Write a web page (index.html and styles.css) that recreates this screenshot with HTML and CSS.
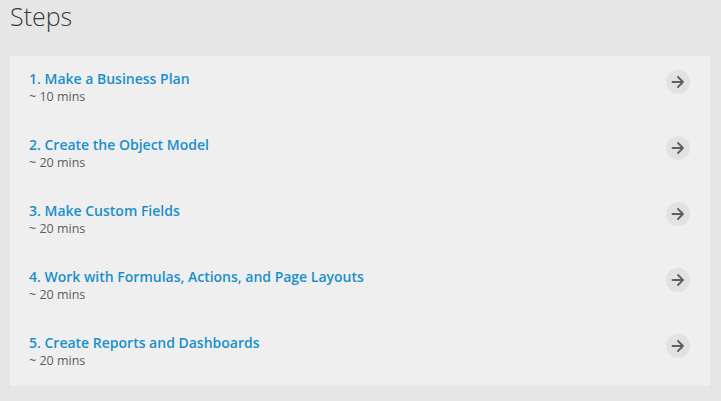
FILE: index.html
```html
<!DOCTYPE html>
<html lang="en">
<head>
<meta charset="utf-8">
<title>Steps</title>
<link rel="stylesheet" href="styles.css">
</head>
<body>
<h1 class="heading">Steps</h1>
<ul class="steps">
  <li class="step">
    <div class="step-text">
      <a class="step-title" href="#">1. Make a Business Plan</a>
      <div class="step-time">~ 10 mins</div>
    </div>
    <span class="step-go"><svg viewBox="0 0 24 24" width="24" height="24"><path d="M6.5 12h10.5M12 7l5 5-5 5" fill="none" stroke="#5f5f5f" stroke-width="1.8" stroke-linecap="round" stroke-linejoin="round"/></svg></span>
  </li>
  <li class="step">
    <div class="step-text">
      <a class="step-title" href="#">2. Create the Object Model</a>
      <div class="step-time">~ 20 mins</div>
    </div>
    <span class="step-go"><svg viewBox="0 0 24 24" width="24" height="24"><path d="M6.5 12h10.5M12 7l5 5-5 5" fill="none" stroke="#5f5f5f" stroke-width="1.8" stroke-linecap="round" stroke-linejoin="round"/></svg></span>
  </li>
  <li class="step">
    <div class="step-text">
      <a class="step-title" href="#">3. Make Custom Fields</a>
      <div class="step-time">~ 20 mins</div>
    </div>
    <span class="step-go"><svg viewBox="0 0 24 24" width="24" height="24"><path d="M6.5 12h10.5M12 7l5 5-5 5" fill="none" stroke="#5f5f5f" stroke-width="1.8" stroke-linecap="round" stroke-linejoin="round"/></svg></span>
  </li>
  <li class="step">
    <div class="step-text">
      <a class="step-title" href="#">4. Work with Formulas, Actions, and Page Layouts</a>
      <div class="step-time">~ 20 mins</div>
    </div>
    <span class="step-go"><svg viewBox="0 0 24 24" width="24" height="24"><path d="M6.5 12h10.5M12 7l5 5-5 5" fill="none" stroke="#5f5f5f" stroke-width="1.8" stroke-linecap="round" stroke-linejoin="round"/></svg></span>
  </li>
  <li class="step">
    <div class="step-text">
      <a class="step-title" href="#">5. Create Reports and Dashboards</a>
      <div class="step-time">~ 20 mins</div>
    </div>
    <span class="step-go"><svg viewBox="0 0 24 24" width="24" height="24"><path d="M6.5 12h10.5M12 7l5 5-5 5" fill="none" stroke="#5f5f5f" stroke-width="1.8" stroke-linecap="round" stroke-linejoin="round"/></svg></span>
  </li>
</ul>
</body>
</html>
```

FILE: styles.css
```css
html, body {
  margin: 0;
  padding: 0;
  background: #e6e6e6;
}
body {
  font-family: "Open Sans", "Noto Sans", sans-serif;
  padding: 0 11px 0 10px;
}
.heading {
  margin: 0;
  font-size: 25px;
  font-weight: 300;
  line-height: 32px;
  color: #3a3a3a;
}
.steps {
  list-style: none;
  margin: 24px 0 0;
  padding: 0;
  background: #efefef;
}
.step {
  display: flex;
  align-items: flex-start;
  justify-content: space-between;
  height: 66px;
  box-sizing: border-box;
  padding: 14px 20px 0 19px;
}
.step-text {
  display: flex;
  flex-direction: column;
}
.step-title {
  font-size: 14px;
  font-weight: 600;
  line-height: 17px;
  color: #1a8fcc;
  text-decoration: none;
}
.step-time {
  font-size: 12.5px;
  line-height: 20px;
  color: #5e5e5e;
}
.step-go {
  width: 24px;
  height: 24px;
  border-radius: 50%;
  background: #e2e2e2;
  display: flex;
}
```
